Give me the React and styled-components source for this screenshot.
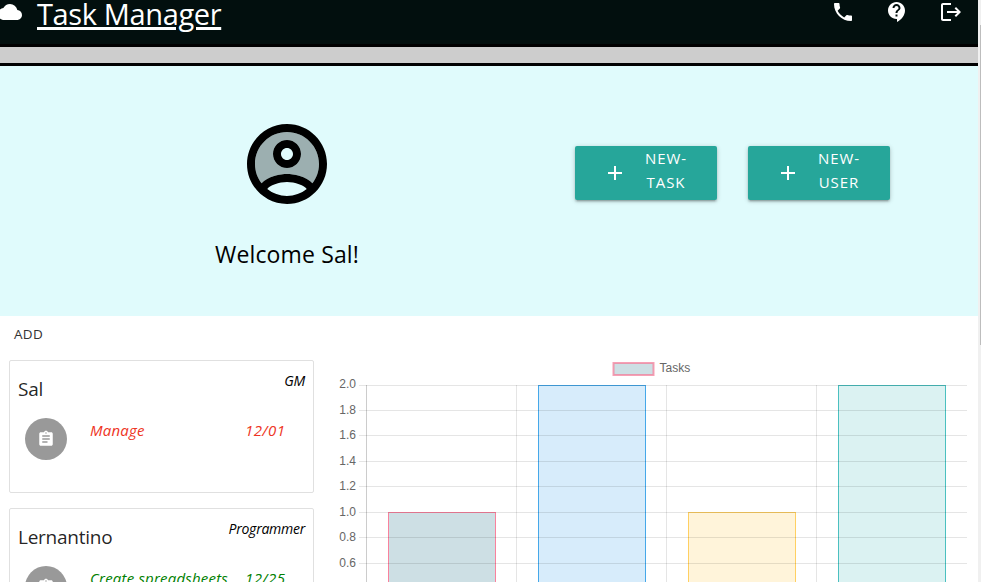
import React from "react";
import styled, { createGlobalStyle } from "styled-components";
import { MdCloud, MdPhone, MdContactSupport, MdLogout, MdAdd, MdAssignment } from "react-icons/md";

const GlobalStyle = createGlobalStyle`
  * { box-sizing: border-box; }
  body {
    margin: 0;
    overflow: hidden;
    background: #fff;
    color: rgba(0, 0, 0, 0.87);
    font-family: "Open Sans", "Noto Sans", sans-serif;
  }
`;

const Shell = styled.div`
  display: flex;
  height: 582px;
  overflow: hidden;
`;

const Page = styled.div`
  width: 978px;
  flex: none;
`;

const ScrollTrack = styled.div`
  flex: 1;
  padding: 25px 0 0 2px;
  background: #f0f0f0;
`;

const ScrollThumb = styled.div`
  height: 320px;
  background: #bdbdbd;
`;

const Header = styled.header`
  display: flex;
  justify-content: space-between;
  align-items: flex-start;
  height: 47px;
  padding-right: 15px;
  background: #020f0e;
  border-bottom: 3px solid #000;
  color: #fff;
`;

const Brand = styled.div`
  display: flex;
  gap: 15px;
  margin-left: -2px;

  svg { flex: none; }
`;

const BrandName = styled.a`
  font-size: 29px;
  line-height: 28px;
  letter-spacing: -0.37px;
  text-decoration: underline;
  text-decoration-thickness: 3px;
  text-underline-offset: 2px;
`;

const NavIcons = styled.nav`
  display: flex;
  gap: 30px;
`;

const Strip = styled.div`
  height: 19px;
  background: #cdcdcd;
  border-bottom: 3px solid #000;
`;

const Hero = styled.section`
  display: flex;
  height: 250px;
  background: #e0fbfc;
`;

const Profile = styled.div`
  display: flex;
  flex-direction: column;
  align-items: center;
  width: 574px;
  padding-top: 50px;
`;

const Welcome = styled.h1`
  margin: 27px 0 0;
  color: #000;
  font-size: 23px;
  font-weight: 400;
  line-height: 30px;
  letter-spacing: 0.14px;
`;

const Actions = styled.div`
  display: flex;
  align-items: flex-start;
  gap: 31px;
  padding: 80px 0 0 1px;
`;

const ActionButton = styled.button`
  display: flex;
  align-items: center;
  gap: 15px;
  width: 142px;
  height: 54px;
  padding: 0 0 0 28px;
  border: 0;
  border-radius: 2px;
  background: #26a69a;
  box-shadow: 0 2px 2px 0 rgba(0, 0, 0, 0.14), 0 3px 1px -2px rgba(0, 0, 0, 0.12), 0 1px 5px 0 rgba(0, 0, 0, 0.2);
  color: #fff;
  font: 15px/24px "Open Sans", "Noto Sans", sans-serif;
  letter-spacing: 0.95px;
  text-align: center;
`;

const ActionLabel = styled.span`
  width: 48px;
  height: 54px;
`;

const AddLink = styled.div`
  padding: 8px 0 0 14px;
  height: 44px;
  font-size: 13.5px;
  line-height: 20px;
  letter-spacing: 0.3px;
  color: #333;
`;

const Content = styled.section`
  display: flex;
  gap: 20px;
  padding-left: 9px;
`;

const CardList = styled.div`
  display: flex;
  flex-direction: column;
  gap: 15px;
  width: 305px;
`;

const Card = styled.article`
  height: 133px;
  padding: 9px 8px 0;
  border: 1px solid #e0e0e0;
  border-radius: 2px;
`;

const CardHead = styled.div`
  display: flex;
  justify-content: space-between;
  height: 48px;
`;

const PersonName = styled.h2`
  margin: 5px 0 0;
  font-size: 19px;
  font-weight: 400;
  line-height: 28px;
  letter-spacing: -0.25px;
`;

const Role = styled.em`
  padding-top: 1px;
  font-size: 14px;
  line-height: 20px;
  letter-spacing: -0.25px;
  color: #000;
`;

const TaskRow = styled.div`
  display: flex;
  padding-left: 7px;
  font-size: 15px;
  font-style: italic;
  line-height: 22px;
  letter-spacing: 0.2px;
  color: ${(p) => p.$color};
`;

const TaskIcon = styled.span`
  display: flex;
  align-items: center;
  justify-content: center;
  width: 42px;
  height: 42px;
  margin-right: 23px;
  border-radius: 50%;
  background: #999;
  color: #fff;
`;

const TaskTitle = styled.span`
  width: 155px;
  padding-top: 1px;
  white-space: nowrap;
`;

const TaskDate = styled.span`
  padding-top: 1px;
  letter-spacing: 0.4px;
`;

const ChartSvg = styled.svg`
  display: block;
  flex: none;

  text {
    fill: #666;
    font: 12px "Liberation Sans", sans-serif;
  }
`;

const PEOPLE = [
  { name: "Sal", role: "GM", task: "Manage", date: "12/01", color: "#ee3524" },
  { name: "Lernantino", role: "Programmer", task: "Create spreadsheets", date: "12/25", color: "#008000" },
];

const TICKS = [
  ["2.0", 35, 38], ["1.8", 60, 64], ["1.6", 85, 89], ["1.4", 111, 115], ["1.2", 136, 140],
  ["1.0", 162, 166], ["0.8", 187, 191], ["0.6", 213, 217],
];

const BARS = [
  { x: 54, y: 162, fill: "rgba(5,95,120,0.2)", stroke: "rgb(249,130,157)" },
  { x: 204, y: 35, fill: "rgba(54,162,235,0.2)", stroke: "rgb(70,168,233)" },
  { x: 354, y: 162, fill: "rgba(255,206,86,0.22)", stroke: "rgb(255,208,98)" },
  { x: 504, y: 35, fill: "rgba(75,192,192,0.2)", stroke: "rgb(75,192,192)" },
];

function Avatar() {
  return (
    <svg width="96" height="96" viewBox="0 0 24 24">
      <path
        opacity="0.3"
        d="M12 4c-4.41 0-8 3.59-8 8 0 1.82.62 3.49 1.64 4.83 1.43-1.74 4.9-2.33 6.36-2.33s4.93.59 6.36 2.33C19.38 15.49 20 13.82 20 12c0-4.41-3.59-8-8-8zm0 9c-1.94 0-3.5-1.56-3.5-3.5S10.06 6 12 6s3.5 1.56 3.5 3.5S13.94 13 12 13z"
      />
      <path d="M12 2C6.48 2 2 6.48 2 12s4.48 10 10 10 10-4.48 10-10S17.52 2 12 2zM7.07 18.28c.43-.9 3.05-1.78 4.93-1.78s4.51.88 4.93 1.78C15.57 19.36 13.86 20 12 20s-3.57-.64-4.93-1.72zm11.29-1.45c-1.43-1.74-4.9-2.33-6.36-2.33s-4.93.59-6.36 2.33C4.62 15.49 4 13.82 4 12c0-4.41 3.59-8 8-8s8 3.59 8 8c0 1.82-.62 3.49-1.64 4.83zM12 6c-1.94 0-3.5 1.56-3.5 3.5S10.06 13 12 13s3.5-1.56 3.5-3.5S13.94 6 12 6zm0 5c-.83 0-1.5-.67-1.5-1.5S11.17 8 12 8s1.5.67 1.5 1.5S12.83 11 12 11z" />
    </svg>
  );
}

/* The view box starts 10 units down, level with the top of the first card. */
function TaskChart() {
  return (
    <ChartSvg width="640" height="222" viewBox="0 10 640 222">
      <rect x="279.5" y="13" width="40" height="12" fill="#cddfe4" stroke="rgba(243,120,150,0.7)" strokeWidth="2" />
      <text x="325.5" y="22">Tasks</text>
      {BARS.map((b) => (
        <rect key={b.x} x={b.x + 0.5} y={b.y + 0.5} width="107" height="300" fill={b.fill} stroke={b.stroke} />
      ))}
      {TICKS.map(([label, y, baseline]) => (
        <g key={label}>
          <path d={`M25 ${y + 0.5}H633`} stroke="rgba(0,0,0,0.1)" />
          <text x="22" y={baseline} textAnchor="end">{label}</text>
        </g>
      ))}
      <path d="M32.5 35V240" stroke="rgba(0,0,0,0.2)" />
      <path d="M182.5 35V240M332.5 35V240M482.5 35V240" stroke="rgba(0,0,0,0.1)" />
    </ChartSvg>
  );
}

function PersonCard({ person }) {
  return (
    <Card>
      <CardHead>
        <PersonName>{person.name}</PersonName>
        <Role>{person.role}</Role>
      </CardHead>
      <TaskRow $color={person.color}>
        <TaskIcon><MdAssignment size={18} /></TaskIcon>
        <TaskTitle>{person.task}</TaskTitle>
        <TaskDate>{person.date}</TaskDate>
      </TaskRow>
    </Card>
  );
}

export default function App() {
  return (
    <>
      <GlobalStyle />
      <Shell>
        <Page>
          <Header>
            <Brand>
              <MdCloud size={24} />
              <BrandName>Task Manager</BrandName>
            </Brand>
            <NavIcons>
              <MdPhone size={24} />
              <MdContactSupport size={24} />
              <MdLogout size={24} />
            </NavIcons>
          </Header>
          <Strip />
          <Hero>
            <Profile>
              <Avatar />
              <Welcome>Welcome Sal!</Welcome>
            </Profile>
            <Actions>
              <ActionButton><MdAdd size={24} /><ActionLabel>NEW-<br />TASK</ActionLabel></ActionButton>
              <ActionButton><MdAdd size={24} /><ActionLabel>NEW-<br />USER</ActionLabel></ActionButton>
            </Actions>
          </Hero>
          <AddLink>ADD</AddLink>
          <Content>
            <CardList>
              {PEOPLE.map((p) => <PersonCard key={p.name} person={p} />)}
            </CardList>
            <TaskChart />
          </Content>
        </Page>
        <ScrollTrack><ScrollThumb /></ScrollTrack>
      </Shell>
    </>
  );
}
